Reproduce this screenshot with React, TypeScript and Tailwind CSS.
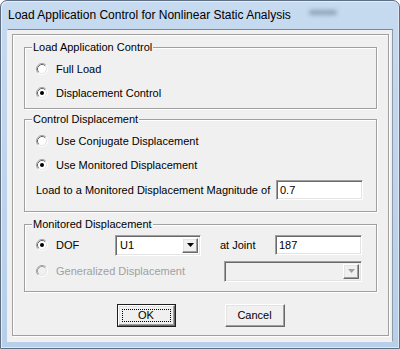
import React from "react";

const sans = "font-['Liberation_Sans',Arial,sans-serif]";

function Radio({ checked, disabled }: { checked?: boolean; disabled?: boolean }) {
	return (
		<svg width="12" height="12" viewBox="0 0 12 12" className="shrink-0">
			<circle cx="6" cy="6" r="5" fill={disabled ? "#f0f0f0" : "#ffffff"} />
			<path d="M2.11 9.89A5.5 5.5 0 0 1 9.89 2.11" fill="none" stroke="#a0a0a0" strokeWidth="1" />
			<path d="M2.82 9.18A4.5 4.5 0 0 1 9.18 2.82" fill="none" stroke={disabled ? "#a0a0a0" : "#696969"} strokeWidth="1" />
			<path d="M9.89 2.11A5.5 5.5 0 0 1 2.11 9.89" fill="none" stroke="#ffffff" strokeWidth="1" />
			<path d="M9.18 2.82A4.5 4.5 0 0 1 2.82 9.18" fill="none" stroke="#e3e3e3" strokeWidth="1" />
			{checked && <circle cx="6" cy="6" r="2" fill={disabled ? "#a0a0a0" : "#000000"} />}
		</svg>
	);
}

function Arrow({ disabled }: { disabled?: boolean }) {
	return (
		<svg width="7" height="4" viewBox="0 0 7 4">
			<polygon points="0,0 7,0 3.5,4" fill={disabled ? "#a0a0a0" : "#000000"} />
		</svg>
	);
}

// sunken edit / combo frame
const sunken =
	"border border-t-[#a0a0a0] border-l-[#a0a0a0] border-b-white border-r-white shadow-[inset_1px_1px_0_#696969,inset_-1px_-1px_0_#e3e3e3]";
// raised button face
const raised =
	"border border-t-white border-l-white border-b-[#696969] border-r-[#696969] shadow-[inset_-1px_-1px_0_#a0a0a0,inset_1px_1px_0_#e3e3e3] bg-[#f0f0f0]";

function Combo({ value, width, disabled }: { value?: string; width: string; disabled?: boolean }) {
	return (
		<div className={`${width} h-[21px] ${sunken} ${disabled ? "bg-[#f0f0f0]" : "bg-white"} flex items-stretch p-[2px]`}>
			<div className="flex-1 pl-[2px] flex items-center leading-[13px]">{value}</div>
			<div className={`w-[16px] ${raised} flex items-center justify-center`}>
				<Arrow disabled={disabled} />
			</div>
		</div>
	);
}

function Field({ value, width }: { value: string; width: string }) {
	return (
		<div className={`${width} h-[20px] ${sunken} bg-white flex items-center pl-[3px] leading-[13px]`}>{value}</div>
	);
}

function Group({ title, height, className, children }: { title: string; height: string; className: string; children: React.ReactNode }) {
	return (
		<div
			className={`${className} ${height} ml-[11px] w-[353px] shrink-0 border border-[#a0a0a0] shadow-[inset_1px_1px_0_#fff,1px_1px_0_#fff]`}
		>
			<div className="mt-[-7px] flex h-[13px] items-center">
				<div className="w-[7px] shrink-0" />
				<div className="bg-[#f0f0f0] px-[1px] leading-[13px] whitespace-nowrap">{title}</div>
			</div>
			{children}
		</div>
	);
}

function Option({ label, checked, disabled, className = "" }: { label: string; checked?: boolean; disabled?: boolean; className?: string }) {
	return (
		<div className={`${className} h-[24px] flex items-center pl-[11px]`}>
			<Radio checked={checked} disabled={disabled} />
			<span className={`ml-[8px] ${disabled ? "text-[#a0a0a0]" : ""}`}>{label}</span>
		</div>
	);
}

export default function App() {
	return (
		<div className="w-[400px] h-[349px] overflow-hidden bg-white">
			<div className="w-[400px] h-[349px] rounded-t-[7px] border border-[#5e6f84] bg-gradient-to-b from-[#c6daf0] to-[#b7cfe9] shadow-[inset_1px_1px_0_#e4eefa,inset_-1px_-1px_0_#dbe8f6]">
				{/* title bar */}
				<div className="h-[28px] flex items-center pl-[7px] pb-[1px]">
					<span className="font-['Liberation_Sans',Arial,sans-serif] text-[12px] leading-[16px] text-black">
						Load Application Control for Nonlinear Static Analysis
					</span>
					<div className="ml-auto mr-[62px] mb-[4px] w-[28px] h-[5px] rounded-full bg-[#8ea2b8] blur-[2px]" />
				</div>

				{/* client area */}
				<div
					className={`${sans} text-[11px] text-black ml-[6px] w-[386px] h-[313px] bg-[#f0f0f0] border border-t-[#7b8795] border-r-[#8e9aa8] border-l-[#e9f1fa] border-b-[#e9f1fa] pt-[4px]`}
				>
					<div className="ml-[4px] w-[377px] h-[302px] border border-[#a0a0a0] shadow-[inset_1px_1px_0_#fff,1px_1px_0_#fff] flex flex-col">
						<Group title="Load Application Control" height="h-[62px]" className="mt-[12px]">
							<Option label="Full Load" className="mt-[3px]" />
							<Option label="Displacement Control" checked />
						</Group>

						<Group title="Control Displacement" height="h-[93px]" className="mt-[10px]">
							<Option label="Use Conjugate Displacement" className="mt-[3px]" />
							<Option label="Use Monitored Displacement" checked />
							<div className="mt-[1px] h-[24px] flex items-center pl-[11px]">
								<span className="w-[240px]">Load to a Monitored Displacement Magnitude of</span>
								<Field value="0.7" width="w-[87px]" />
							</div>
						</Group>

						<Group title="Monitored Displacement" height="h-[68px]" className="mt-[12px]">
							<div className="mt-[2px] h-[24px] flex items-center pl-[11px]">
								<Radio checked />
								<span className="ml-[8px] w-[59px]">DOF</span>
								<Combo value="U1" width="w-[86px]" />
								<span className="ml-[19px] w-[55px]">at Joint</span>
								<Field value="187" width="w-[87px]" />
							</div>
							<div className="mt-[2px] h-[24px] flex items-center pl-[11px]">
								<Radio disabled />
								<span className="ml-[8px] w-[168px] text-[#a0a0a0]">Generalized Displacement</span>
								<Combo width="w-[138px]" disabled />
							</div>
						</Group>

						<div className="mt-[12px] flex justify-center gap-[49px]">
							<button className="w-[59px] h-[23px] border border-[#1e1e1e] bg-[#f0f0f0] p-0">
								<div className={`h-full ${raised} p-[3px]`}>
									<div className="h-full border border-dotted border-black flex items-center justify-center leading-[13px]">
										OK
									</div>
								</div>
							</button>
							<button className={`w-[60px] h-[23px] ${raised} flex items-center justify-center leading-[13px]`}>
								Cancel
							</button>
						</div>
					</div>
				</div>
			</div>
		</div>
	);
}
